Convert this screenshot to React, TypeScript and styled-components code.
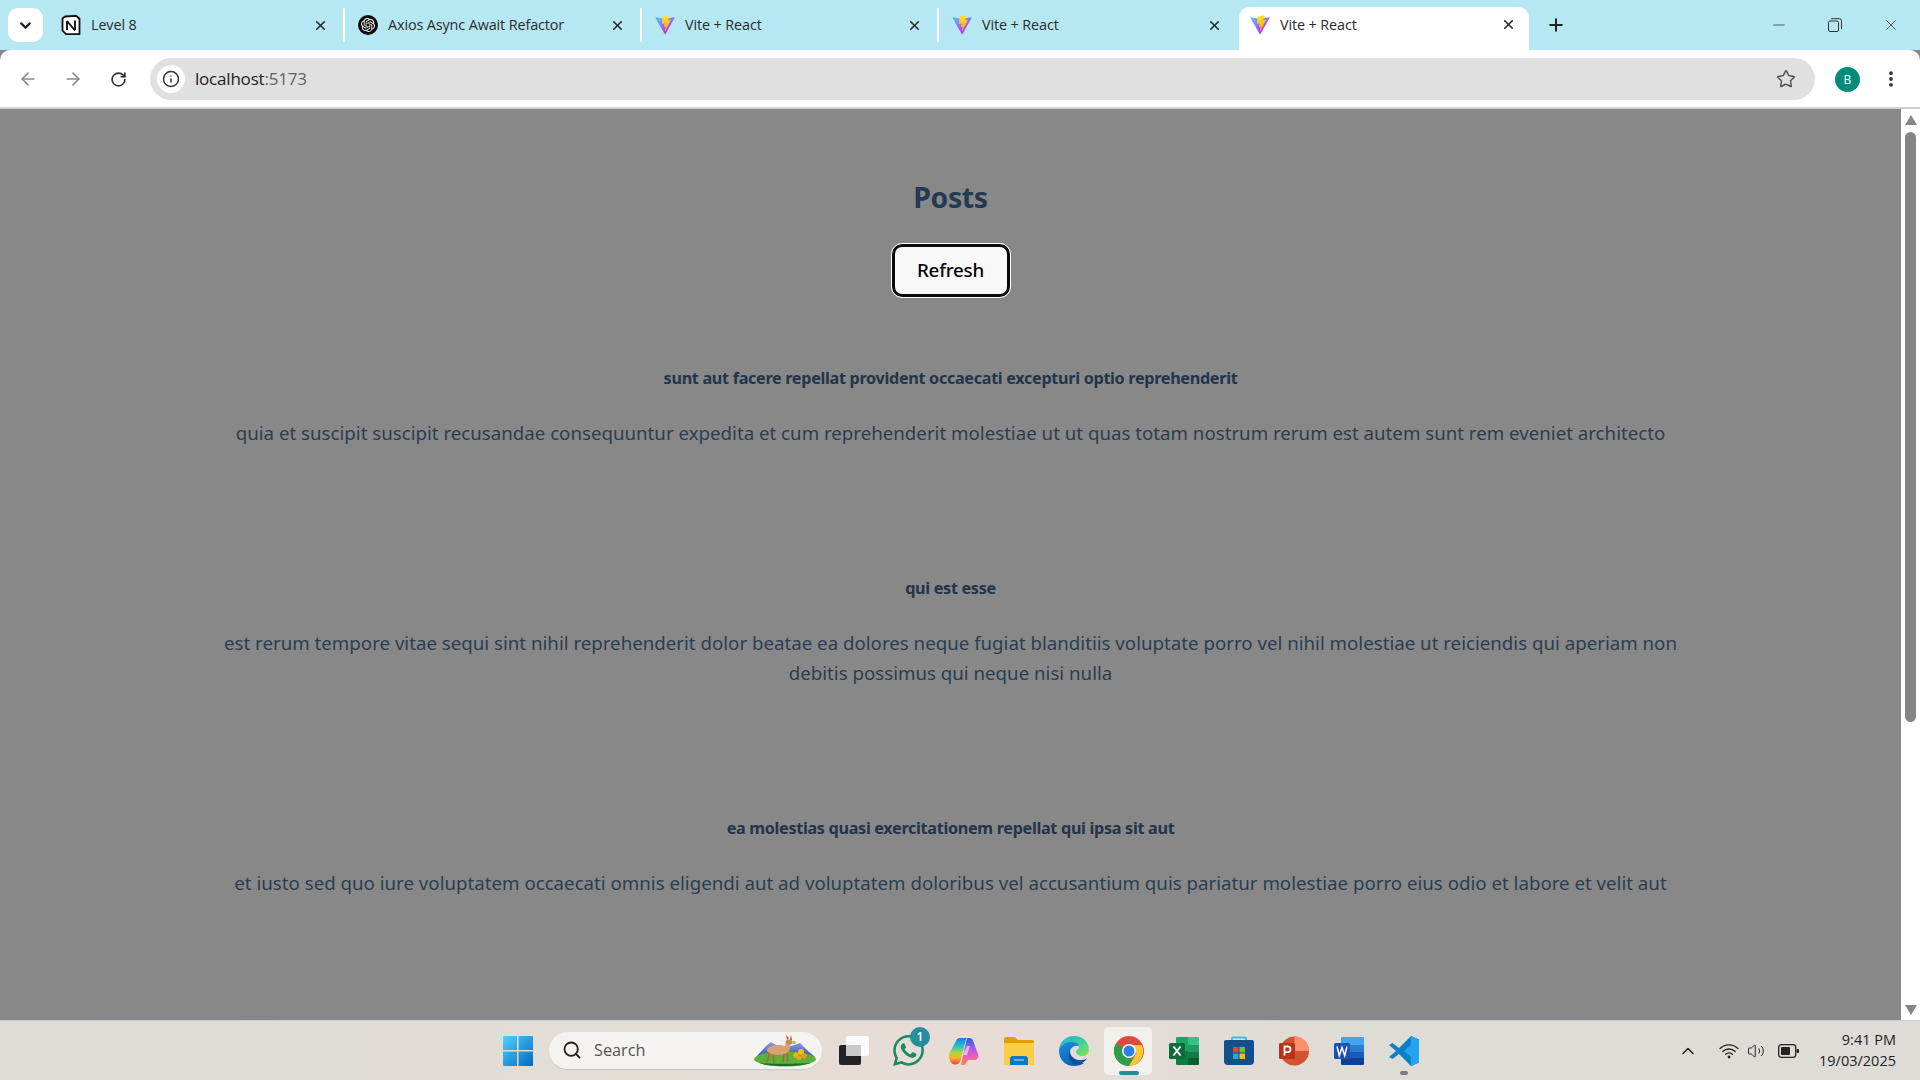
import React from "react";
import styled, { createGlobalStyle } from "styled-components";
import { ArrowLeft, ArrowRight, ChevronDown, ChevronUp, Info, Minus, Plus, RotateCw, Search, Star, X, EllipsisVertical, Volume2 } from "lucide-react";
import { SiOpenai, SiWhatsapp } from "react-icons/si";

const Global = createGlobalStyle`
  html, body { margin: 0; padding: 0; height: 100%; overflow: hidden; }
  body { font-family: "Open Sans", "Noto Sans", sans-serif; }
  * { box-sizing: border-box; }
`;

const Screen = styled.div`
  width: 1920px; height: 1080px; display: flex; flex-direction: column; overflow: hidden; background: #888;
`;
const TabStrip = styled.div`
  height: 50px; flex: none; background: #b5e8f3; display: flex; align-items: flex-start; padding-left: 8px;
`;
const TabMenu = styled.div`
  width: 35px; height: 34px; margin-top: 8px; margin-right: 5px; border-radius: 10px; background: #fff;
  display: flex; align-items: center; justify-content: center; color: #222;
`;
const Tab = styled.div<{ $active?: boolean; $sep?: boolean; $width: number }>`
  width: ${p => p.$width}px; height: ${p => (p.$active ? 43 : 34)}px; margin-top: ${p => (p.$active ? 7 : 8)}px; flex: none;
  display: flex; align-items: center; padding: ${p => (p.$active ? "0 11px 8px 11px" : "0 15px 0 13px")};
  background: ${p => (p.$active ? "#fff" : "transparent")};
  border-radius: ${p => (p.$active ? "10px 10px 0 0" : "0")};
  color: #2a2a2a;
  border-right: 2px solid ${p => (p.$sep ? "#fff" : "transparent")};
`;
const FavSlot = styled.span`
  width: 20px; height: 20px; flex: none; display: flex; align-items: center; justify-content: center;
`;
const TabTitle = styled.span`
  margin-left: 10px; flex: 1; font: 400 14.4px/18px "Open Sans", sans-serif; letter-spacing: -0.12px; white-space: nowrap; color: #2b2b2b;
`;
const NewTab = styled.div`
  width: 26px; height: 26px; margin: 12px 0 0 14px; display: flex; align-items: center; justify-content: center; color: #222;
`;
const WinControls = styled.div`
  margin-left: auto; display: flex; height: 50px; align-items: center; padding-right: 20px; gap: 40px; color: #333; padding-bottom: 1px;
`;
const Toolbar = styled.div`
  height: 57px; flex: none; background: #fff; display: flex; align-items: center; padding: 1px 10px 0 18px;
  border-radius: 10px 10px 0 0;
`;
const ToolBtn = styled.div<{ $muted?: boolean; $gap: number }>`
  width: 20px; height: 20px; margin-right: ${p => p.$gap}px; display: flex; align-items: center; justify-content: center;
  color: ${p => (p.$muted ? "#8a8a8a" : "#333")};
`;
const Omnibox = styled.div`
  width: 1665px; height: 42px; flex: none; border-radius: 21px; background: #e0e0e0; display: flex; align-items: center; padding: 0 19px 0 7px;
`;
const InfoDot = styled.div`
  width: 28px; height: 28px; border-radius: 50%; background: #fff; display: flex; align-items: center; justify-content: center; color: #333;
`;
const Url = styled.div`
  margin-left: 10px; flex: 1; font: 400 17px/20px "Open Sans", sans-serif; color: #222; letter-spacing: -0.2px;
  span { color: #5f6368; }
`;
const Avatar = styled.div`
  width: 25px; height: 25px; border-radius: 50%; background: #008c7a; color: #fff; margin-left: 20px;
  font: 400 12px/25px "Open Sans", sans-serif; text-align: center;
`;
const MenuBtn = styled.div`
  margin-left: 21px; width: 20px; display: flex; justify-content: center; color: #333;
`;
const Divider = styled.div`height: 2px; flex: none; background: #d0d0d0;`;
const Viewport = styled.div`flex: 1; min-height: 0; display: flex;`;
const Page = styled.main`
  flex: 1; min-width: 0; overflow: hidden; background: #888; display: flex; flex-direction: column; align-items: center; padding-top: 68px; color: #2c3e50; font-family: "Noto Sans", sans-serif;
`;
const Heading = styled.h1`
  margin: 0; flex: none; font: 700 28.5px/40px "Noto Sans", sans-serif; color: #233a52; letter-spacing: -0.4px;
`;
const RefreshButton = styled.button`
  margin-top: 27px; flex: none; width: 118px; height: 53px; border-radius: 10px; border: 3px solid #0a0a0a; outline: 1px solid #fff;
  background: #f9f9f9; color: #000; font: 500 18.8px/1 "Noto Sans", sans-serif; letter-spacing: -0.2px; padding: 0;
`;
const Post = styled.article`
  width: 1500px; flex: none; text-align: center; margin-bottom: 128px;
  &:first-of-type { margin-top: 69px; }
`;
const PostTitle = styled.h2`
  margin: 0 0 28px; font: 700 16.2px/24px "Noto Sans", sans-serif; color: #22354a; letter-spacing: -0.31px;
`;
const PostBody = styled.p`
  margin: 0; font: 400 18.7px/30px "Noto Sans", sans-serif; color: #2c3e50;
`;
const Scrollbar = styled.div`
  width: 19px; flex: none; background: #fff; position: relative; display: flex; flex-direction: column; align-items: center; justify-content: space-between; padding: 6px 0 5px;
`;
const Thumb = styled.div`
  position: absolute; left: 4px; top: 23px; width: 11px; height: 590px; border-radius: 6px; background: #858585;
`;
const Arrow = styled.div<{ $down?: boolean }>`
  width: 0; height: 0; border-left: 6.5px solid transparent; border-right: 6.5px solid transparent;
  ${p => (p.$down ? "border-top: 10px solid #858585;" : "border-bottom: 10px solid #858585;")}
`;
const Taskbar = styled.footer`
  height: 60px; flex: none; display: flex; align-items: center; padding-left: 490px;
  background: linear-gradient(90deg, #dedcd6 0%, #e2ddd6 30%, #e8dcd7 52%, #dfdcd5 70%, #dfdcd8 100%);
  border-top: 1px solid #cfcdc8;
`;
const Slot = styled.div<{ $active?: boolean }>`
  width: 55px; height: 48px; flex: none; display: flex; align-items: center; justify-content: center; position: relative; border-radius: 5px;
  ${p => (p.$active ? "&::before { content: ''; position: absolute; left: 3px; right: 4px; top: 0; bottom: 0; border-radius: 5px; background: #f1f0ec; }" : "")}
  svg { position: relative; }
`;
const RunDot = styled.span<{ $wide?: boolean }>`
  position: absolute; bottom: 0; left: 50%; transform: translateX(-50%); height: 4px; border-radius: 2px;
  width: ${p => (p.$wide ? 20 : 8)}px; background: ${p => (p.$wide ? "#2a8a9c" : "#7c7c7c")};
`;
const SearchBox = styled.div`
  width: 273px; height: 38px; flex: none; margin: 0 4px; border-radius: 19px; background: #f4f3f0; border-bottom: 1px solid #c9c7c2;
  display: flex; align-items: center; padding: 0 5px 0 13px; color: #222;
`;
const SearchLabel = styled.span`
  margin-left: 12px; flex: 1; font: 400 16.3px/20px "Open Sans", sans-serif; color: #555;
`;
const Badge = styled.span`
  position: absolute; left: 29px; top: 0; width: 20px; height: 20px; border-radius: 50%; background: #278c9e; color: #fff; font: 600 12px/20px "Open Sans", sans-serif; text-align: center;
`;
const Tray = styled.div`
  margin-left: auto; display: flex; align-items: center; padding-right: 24px; color: #222;
`;
const TrayIcon = styled.div<{ $w: number; $ml?: number }>`
  width: ${p => p.$w}px; margin-left: ${p => p.$ml ?? 0}px; display: flex; justify-content: center;
`;
const Clock = styled.div`
  margin-left: 17px; padding-bottom: 2px; text-align: right; font: 400 14.5px/21px "Open Sans", sans-serif; color: #222;
`;

const Vite = ({ id }: { id: string }) => (
  <svg width="20" height="20" viewBox="0 0 410 404">
    <defs>
      <linearGradient id={`a${id}`} x1="6" y1="33" x2="235" y2="344" gradientUnits="userSpaceOnUse"><stop stopColor="#41D1FF" /><stop offset="1" stopColor="#BD34FE" /></linearGradient>
      <linearGradient id={`b${id}`} x1="194" y1="8" x2="236" y2="293" gradientUnits="userSpaceOnUse"><stop stopColor="#FFEA83" /><stop offset=".08" stopColor="#FFDD35" /><stop offset="1" stopColor="#FFA800" /></linearGradient>
    </defs>
    <path fill={`url(#a${id})`} d="M399.641 59.5246L215.643 388.545C211.844 395.338 202.084 395.378 198.228 388.618L10.5817 59.5563C6.38087 52.1896 12.6802 43.2665 21.0281 44.7586L205.223 77.6824C206.398 77.8924 207.601 77.8904 208.776 77.6763L389.119 44.8058C397.439 43.2894 403.768 52.1434 399.641 59.5246Z" />
    <path fill={`url(#b${id})`} d="M292.965 1.5744L156.801 28.2552C154.563 28.6937 152.906 30.5903 152.771 32.8664L144.395 174.33C144.198 177.662 147.258 180.248 150.51 179.498L188.42 170.749C191.967 169.931 195.172 173.055 194.443 176.622L183.18 231.775C182.422 235.487 185.907 238.661 189.532 237.56L212.947 230.446C216.577 229.344 220.065 232.527 219.297 236.242L201.398 322.875C200.278 328.294 207.486 331.249 210.492 326.603L212.5 323.5L323.454 102.072C325.312 98.3645 322.108 94.137 318.036 94.9228L279.014 102.454C275.347 103.161 272.227 99.746 273.262 96.1583L298.731 7.86689C299.767 4.27314 296.636 0.855181 292.965 1.5744Z" />
  </svg>
);

const NotionFav = () => (
  <svg width="20" height="20" viewBox="0 0 20 20">
    <path d="M4 1.500L15 .8l3.500 3V19L5 19.200 1.500 15.500V3.500z" fill="#fff" stroke="#111" strokeWidth="1.800" strokeLinejoin="round" />
    <path d="M6 6v9M6 6l8 9.500M14 5.500V15" stroke="#111" strokeWidth="1.900" fill="none" />
  </svg>
);

const GptFav = () => (
  <svg width="20" height="20" viewBox="0 0 20 20">
    <circle cx="10" cy="10" r="10" fill="#0d0d0d" />
    <g transform="translate(3 3)"><SiOpenai size={14} color="#fff" /></g>
  </svg>
);

const RestoreIcon = () => (
  <svg width="14" height="14" viewBox="0 0 14 14" fill="none" stroke="#333" strokeWidth="1">
    <rect x=".5" y="3" width="10" height="10.5" rx="1.5" />
    <path d="M3 .7h8.5a2 2 0 0 1 2 2V11" />
  </svg>
);

const WindowsLogo = () => (
  <svg width="30" height="30" viewBox="0 0 30 30">
    <defs><linearGradient id="win" x1="0" y1="0" x2="1" y2="1"><stop stopColor="#4fd2fb" /><stop offset="1" stopColor="#0168c4" /></linearGradient></defs>
    <path fill="url(#win)" d="M1 0h13v14H0V1a1 1 0 0 1 1-1zM15.500 0H29a1 1 0 0 1 1 1v13H15.500zM0 15.500h14V30H1a1 1 0 0 1-1-1zM15.500 15.500H30V29a1 1 0 0 1-1 1H15.500z" />
  </svg>
);

const DeerArt = () => (
  <svg width="63" height="34" viewBox="0 0 63 34">
    <defs><linearGradient id="mtn" x1="0" y1="0" x2="0" y2="1"><stop stopColor="#8f9ee0" /><stop offset="1" stopColor="#3a4fb0" /></linearGradient></defs>
    <path d="M3 23l9-10 5-4 7 4 5 4 8-4 9-3 8 8 7 6z" fill="url(#mtn)" />
    <ellipse cx="31" cy="26" rx="31" ry="7.500" fill="#5cb13a" />
    <path d="M5 30c10 4 42 4 52 0-14 1-38 1-52 0z" fill="#14702c" />
    <path d="M16 18l-3 11M19 20l1 10M30 20l-1 10M33 19l1 10" stroke="#a8683c" strokeWidth="1.600" />
    <ellipse cx="24" cy="17" rx="11" ry="5" fill="#d9a174" />
    <path d="M30 17l2-8 5 1-2 9z" fill="#d9a174" />
    <ellipse cx="35" cy="9" rx="3.500" ry="2.600" fill="#c98a5c" />
    <path d="M33 7l-1-5 3 3zM36 7l1-5 1 5z" fill="#b4562f" />
    <circle cx="40" cy="9.500" r="1.800" fill="#9bc94a" />
    <circle cx="42" cy="22" r="2.600" fill="#f2b01d" /><circle cx="47" cy="19" r="3" fill="#f5bd1f" /><circle cx="50" cy="23" r="2.800" fill="#e89a10" /><circle cx="45" cy="25" r="2.200" fill="#eca515" />
  </svg>
);

const TaskView = () => (
  <svg width="30" height="30" viewBox="0 0 30 30">
    <rect x="7" y="0" width="23" height="20" rx="2" fill="#fbfbfb" />
    <rect x="0" y="9" width="22" height="20" rx="2" fill="#232323" />
    <rect x="7" y="9" width="15" height="11" fill="#c9c9c9" />
  </svg>
);

const Copilot = () => (
  <svg width="30" height="28" viewBox="0 0 30 28">
    <defs>
      <linearGradient id="cpA" x1="0" y1="0" x2="0" y2="1"><stop stopColor="#1a7fe8" /><stop offset=".32" stopColor="#25c5c8" /><stop offset=".55" stopColor="#a8d83a" /><stop offset=".75" stopColor="#f6b52a" /><stop offset="1" stopColor="#ef3f33" /></linearGradient>
      <linearGradient id="cpB" x1="0" y1="0" x2="0" y2="1"><stop stopColor="#1565d8" /><stop offset=".35" stopColor="#a25ce8" /><stop offset=".7" stopColor="#ee5ebc" /><stop offset="1" stopColor="#f78a3e" /></linearGradient>
    </defs>
    <path fill="url(#cpB)" d="M20 1c2.500 0 3.800 1.500 4.500 4L29 17c1 3.500-.5 6-4 6h-6l-2 3.500c-.7 1-1.500 1.500-3 1.500h-2L17 5c.6-2.500 1.500-4 3-4z" />
    <path fill="url(#cpA)" d="M11 1h9c-2 0-3 1-3.500 3L12 22c-.8 3.500-2.500 5.500-5.500 5.500-3.200 0-5-2-5.700-4.500L0 21c-.5-2 0-3.500 1-6L6.500 5C7.500 2.500 8.500 1 11 1z" />
    <path fill="#fff" opacity=".55" d="M18 9h3l-3 9h-4z" />
  </svg>
);

const Folder = () => (
  <svg width="30" height="28" viewBox="0 0 30 28">
    <path d="M0 2a2 2 0 0 1 2-2h9l3 3h14a2 2 0 0 1 2 2v3H0z" fill="#e0a100" />
    <path d="M0 6h30v22H0z" fill="#fbcf45" />
    <path d="M6 28v-6a3 3 0 0 1 3-3h12a3 3 0 0 1 3 3v6z" fill="#0f78c8" />
    <path d="M10 23h10" stroke="#7fc4ef" strokeWidth="1.500" />
  </svg>
);

const Edge = () => (
  <svg width="30" height="30" viewBox="0 0 30 30">
    <defs>
      <linearGradient id="edA" x1="0" y1="0" x2="1" y2=".8"><stop stopColor="#1fb4d8" /><stop offset=".55" stopColor="#38c9a4" /><stop offset="1" stopColor="#7ee25f" /></linearGradient>
      <linearGradient id="edB" x1="0" y1="0" x2=".6" y2="1"><stop stopColor="#1a8fe0" /><stop offset="1" stopColor="#0c5fb0" /></linearGradient>
    </defs>
    <path fill="url(#edA)" d="M15 0c9 0 15 6 15 14 0 4-3 6-7 6-3 0-6-2-6-4 0-3 3-2 3-5 0-3-5-5-9-4C6 8 2 11 0 15 0 7 6 0 15 0z" />
    <path fill="url(#edB)" d="M0 15C1 10 6 6 12 6c4 0 7 1 8 4-4-1-8 1-9 5-1 6 5 12 12 12 1 0 2 0 3-.500-3 2.500-7 3.500-11 3.500C7 30 0 24 0 15z" />
    <path fill="#0e4f96" d="M11 15c0 6 6 10 12 9 2 0 4-1 5-2-2 4-6 6-10 6-7 0-10-7-7-13z" />
  </svg>
);

const Chrome = () => (
  <svg width="30" height="30" viewBox="0 0 30 30">
    <circle cx="15" cy="15" r="15" fill="#dd4b3e" />
    <path d="M15 15L2 7.500A15 15 0 0 0 15 30l7-13z" fill="#2c9f48" />
    <path d="M15 9h13a15 15 0 0 1-13 21l7.500-13z" fill="#fcc934" />
    <circle cx="15" cy="15" r="7" fill="#fff" />
    <circle cx="15" cy="15" r="5.500" fill="#2f7fe8" />
  </svg>
);

const Excel = () => (
  <svg width="30" height="30" viewBox="0 0 30 30">
    <path d="M8 1h11v14H7V2a1 1 0 0 1 1-1z" fill="#21a366" />
    <path d="M19 1h10a1 1 0 0 1 1 1v7H19z" fill="#33c481" />
    <path d="M19 9h11v7H19z" fill="#1f9a60" />
    <path d="M7 15h12v14H8a1 1 0 0 1-1-1z" fill="#107c41" />
    <path d="M19 16h11v6H19z" fill="#157a4a" />
    <path d="M19 22h11v6a1 1 0 0 1-1 1H19z" fill="#0e5c34" />
    <rect x="0" y="7" width="16" height="16" rx="1.500" fill="#0e6b3a" />
    <path d="M4.500 10.500l7 9M11.500 10.500l-7 9" stroke="#fff" strokeWidth="1.900" />
  </svg>
);

const StoreIcon = () => (
  <svg width="30" height="30" viewBox="0 0 30 30">
    <path d="M8 5V2.500a1 1 0 0 1 1-1h12a1 1 0 0 1 1 1V5" fill="none" stroke="#2cc3ea" strokeWidth="2" />
    <path d="M0 6a2 2 0 0 1 2-2h26a2 2 0 0 1 2 2v19a4 4 0 0 1-4 4H4a4 4 0 0 1-4-4z" fill="#134f8c" />
    <rect x="9" y="11" width="5.500" height="5.500" fill="#e8492e" />
    <rect x="15.500" y="11" width="5.500" height="5.500" fill="#7fba2c" />
    <rect x="9" y="17.500" width="5.500" height="5.500" fill="#22a7e6" />
    <rect x="15.500" y="17.500" width="5.500" height="5.500" fill="#fbb713" />
  </svg>
);

const PowerPoint = () => (
  <svg width="30" height="30" viewBox="0 0 30 30">
    <circle cx="15.500" cy="15" r="14.500" fill="#d35230" />
    <path d="M15.500.5A14.500 14.500 0 0 1 30 15H15.500z" fill="#ff8f6b" />
    <rect x="0" y="7" width="16" height="16" rx="1.500" fill="#b7341a" />
    <path d="M5.500 19.500v-9h3.200a2.800 2.800 0 0 1 0 5.600H5.500" fill="none" stroke="#fff" strokeWidth="1.800" />
  </svg>
);

const WordIcon = () => (
  <svg width="30" height="30" viewBox="0 0 30 30">
    <path d="M8 1h21a1 1 0 0 1 1 1v7H7V2a1 1 0 0 1 1-1z" fill="#41a5ee" />
    <path d="M7 9h23v7H7z" fill="#2b7cd3" />
    <path d="M7 16h23v6H7z" fill="#185abd" />
    <path d="M7 22h23v6a1 1 0 0 1-1 1H8a1 1 0 0 1-1-1z" fill="#103f91" />
    <rect x="0" y="7" width="16" height="16" rx="1.500" fill="#1a52b0" />
    <path d="M3 10.500l2.300 9 2.700-8 2.700 8 2.300-9" fill="none" stroke="#fff" strokeWidth="1.500" />
  </svg>
);

const VSCode = () => (
  <svg width="30" height="30" viewBox="0 0 30 30">
    <path d="M22 0l8 3.500v23L22 30 10 18l-6.500 5L0 21l7-6-7-6 3.500-2L10 12z" fill="#0f7fc4" />
    <path d="M22 0l8 3.500v23L22 30V21l-7-6 7-6z" fill="#22a5ee" />
  </svg>
);

const Wifi = () => (
  <svg width="20" height="16" viewBox="0 0 20 16" fill="none" stroke="#222" strokeWidth="1.300" strokeLinecap="round">
    <path d="M1 5.500a13 13 0 0 1 18 0M3.800 8.500a9 9 0 0 1 12.400 0M6.600 11.300a5 5 0 0 1 6.800 0" />
    <circle cx="10" cy="14" r="1.400" fill="#222" stroke="none" />
  </svg>
);

const Battery = () => (
  <svg width="21" height="14" viewBox="0 0 21 14">
    <rect x=".7" y=".7" width="17" height="12.600" rx="2.500" fill="none" stroke="#222" strokeWidth="1.300" />
    <rect x="3" y="3" width="9" height="8" rx="1" fill="#222" />
    <rect x="18.500" y="5" width="2.500" height="4" rx="1" fill="#222" />
  </svg>
);

const tabs = [
  { title: "Level 8", fav: <NotionFav />, width: 297, sep: true },
  { title: "Axios Async Await Refactor", fav: <GptFav />, width: 297, sep: true },
  { title: "Vite + React", fav: <Vite id="t3" />, width: 297, sep: true },
  { title: "Vite + React", fav: <Vite id="t4" />, width: 300, sep: false },
];

const posts = [
  { t: "sunt aut facere repellat provident occaecati excepturi optio reprehenderit", b: "quia et suscipit suscipit recusandae consequuntur expedita et cum reprehenderit molestiae ut ut quas totam nostrum rerum est autem sunt rem eveniet architecto" },
  { t: "qui est esse", b: "est rerum tempore vitae sequi sint nihil reprehenderit dolor beatae ea dolores neque fugiat blanditiis voluptate porro vel nihil molestiae ut reiciendis qui aperiam non debitis possimus qui neque nisi nulla" },
  { t: "ea molestias quasi exercitationem repellat qui ipsa sit aut", b: "et iusto sed quo iure voluptatem occaecati omnis eligendi aut ad voluptatem doloribus vel accusantium quis pariatur molestiae porro eius odio et labore et velit aut" },
];

export default function App() {
  return (
    <Screen>
      <Global />
      <TabStrip>
        <TabMenu><ChevronDown size={17} strokeWidth={3} /></TabMenu>
        {tabs.map((t, i) => (
          <Tab key={i} $width={t.width} $sep={t.sep}>
            <FavSlot>{t.fav}</FavSlot>
            <TabTitle>{t.title}</TabTitle>
            <X size={15} strokeWidth={2.6} />
          </Tab>
        ))}
        <Tab $active $width={290}>
          <FavSlot><Vite id="t5" /></FavSlot>
          <TabTitle>Vite + React</TabTitle>
          <X size={15} strokeWidth={2.6} />
        </Tab>
        <NewTab><Plus size={20} strokeWidth={2.4} /></NewTab>
        <WinControls>
          <Minus size={18} strokeWidth={1} />
          <RestoreIcon />
          <X size={18} strokeWidth={1} />
        </WinControls>
      </TabStrip>
      <Toolbar>
        <ToolBtn $muted $gap={25}><ArrowLeft size={20} strokeWidth={2} /></ToolBtn>
        <ToolBtn $muted $gap={25}><ArrowRight size={20} strokeWidth={2} /></ToolBtn>
        <ToolBtn $gap={22}><RotateCw size={17} strokeWidth={2.4} /></ToolBtn>
        <Omnibox>
          <InfoDot><Info size={18} strokeWidth={2} /></InfoDot>
          <Url>localhost<span>:5173</span></Url>
          <Star size={20} strokeWidth={1.8} color="#555" />
        </Omnibox>
        <Avatar>B</Avatar>
        <MenuBtn><EllipsisVertical size={20} strokeWidth={2.6} /></MenuBtn>
      </Toolbar>
      <Divider />
      <Viewport>
        <Page>
          <Heading>Posts</Heading>
          <RefreshButton>Refresh</RefreshButton>
          {posts.map(p => (
            <Post key={p.t}>
              <PostTitle>{p.t}</PostTitle>
              <PostBody>{p.b}</PostBody>
            </Post>
          ))}
        </Page>
        <Scrollbar>
          <Arrow />
          <Thumb />
          <Arrow $down />
        </Scrollbar>
      </Viewport>
      <Taskbar>
        <Slot><WindowsLogo /></Slot>
        <SearchBox>
          <Search size={20} strokeWidth={2.2} />
          <SearchLabel>Search</SearchLabel>
          <DeerArt />
        </SearchBox>
        <Slot><TaskView /></Slot>
        <Slot><SiWhatsapp size={31} color="#1b8a62" /><Badge>1</Badge></Slot>
        <Slot><Copilot /></Slot>
        <Slot><Folder /></Slot>
        <Slot><Edge /></Slot>
        <Slot $active><Chrome /><RunDot $wide /></Slot>
        <Slot><Excel /></Slot>
        <Slot><StoreIcon /></Slot>
        <Slot><PowerPoint /></Slot>
        <Slot><WordIcon /></Slot>
        <Slot><VSCode /><RunDot /></Slot>
        <Tray>
          <TrayIcon $w={26}><ChevronUp size={20} strokeWidth={1.8} /></TrayIcon>
          <TrayIcon $w={26} $ml={15}><Wifi /></TrayIcon>
          <TrayIcon $w={26} $ml={1}><Volume2 size={18} strokeWidth={1.3} /></TrayIcon>
          <TrayIcon $w={28} $ml={5}><Battery /></TrayIcon>
          <Clock>9:41 PM<br />19/03/2025</Clock>
        </Tray>
      </Taskbar>
    </Screen>
  );
}
